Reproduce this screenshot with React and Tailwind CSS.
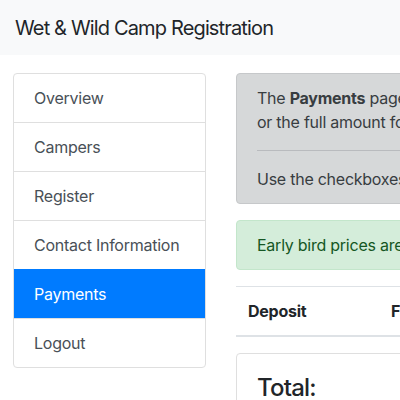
const menu = ["Overview", "Campers", "Register", "Contact Information", "Payments", "Logout"];

const App = () => {
  return (
    <div
      className="w-[400px] h-[400px] overflow-hidden bg-white text-[#212529] text-[16px] leading-6 tracking-[-0.25px]"
      style={{ fontFamily: "Inter, 'Liberation Sans', sans-serif" }}
    >
      <div className="h-[55px] bg-[#f8f9fa] flex items-center px-[15px]">
        <p className="text-[20px] tracking-[-0.85px]">Wet &amp; Wild Camp Registration</p>
      </div>
      <div className="flex pl-[13px] pt-[18px] gap-[30px]">
        <div className="w-[193px] shrink-0">
          <div className="border border-[#dfdfdf] rounded-[4px] overflow-hidden">
            {menu.map((item, i) => {
              let cls = "h-[49px] flex items-center px-5 text-[#495057] border-t border-[#dfdfdf]";
              if (i === 0) cls = "h-[48px] flex items-center px-5 text-[#495057]";
              if (item === "Payments") cls = "h-[49px] flex items-center px-5 bg-[#007bff] text-white border-t border-[#007bff]";
              return (
                <div key={item} className={cls}>
                  {item}
                </div>
              );
            })}
          </div>
        </div>
        <div className="w-[560px] shrink-0">
          <div className="bg-[#d6d8d9] border border-[#c6c8ca] rounded-[4px] px-5 py-3 text-[#383d41]">
            <p>
              The <b>Payments</b> page allows you to pay either the deposit
              <br />
              or the full amount for each of your campers.
            </p>
            <hr className="my-4 border-[#b9bbbe]" />
            <p>Use the checkboxes below to select the items you want to pay.</p>
          </div>
          <div className="mt-4 bg-[#d4edda] border border-[#c3e6cb] rounded-[4px] px-5 py-3 text-[#155724]">
            Early bird prices are in effect until May 1st.
          </div>
          <div className="mt-4 border-t border-[#dee2e6] border-b-2 flex font-bold">
            <div className="w-[143px] p-3">Deposit</div>
            <div className="p-3">Full Amount</div>
          </div>
          <div className="mt-4 border border-[#dfdfdf] rounded-[4px] p-5">
            <p className="text-[24px] leading-[1.2] font-medium tracking-[-0.8px]">Total:</p>
          </div>
        </div>
      </div>
    </div>
  );
};

export default App;
